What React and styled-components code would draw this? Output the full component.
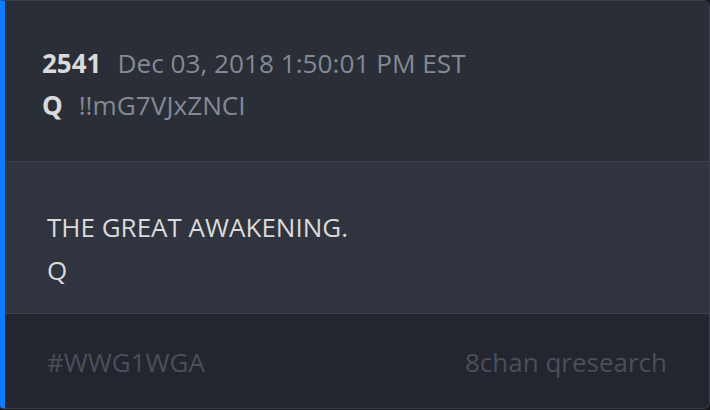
import React from 'react';
import styled, { createGlobalStyle } from 'styled-components';

const GlobalStyle = createGlobalStyle`
  html, body {
    margin: 0;
    padding: 0;
    background: #16181d;
  }
  body {
    font-family: "Open Sans", "Noto Sans", sans-serif;
  }
`;

const Card = styled.article`
  width: 710px;
  height: 409px;
  box-sizing: border-box;
  display: flex;
  flex-direction: column;
  border: 1px solid #3b404a;
  border-left: 5px solid #0a7cff;
  border-radius: 0 7px 7px 4px;
  overflow: hidden;
  background: #2a2e36;
`;

const Header = styled.header`
  height: 161px;
  box-sizing: border-box;
  padding: 41px 0 0 37px;
  background: #2a2e36;
  border-bottom: 1px solid #3b404a;
`;

const MetaRow = styled.div`
  display: flex;
  align-items: baseline;
  gap: 16px;
  height: 42px;
  line-height: 42px;
`;

const PostNumber = styled.span`
  font-size: 26px;
  font-weight: 700;
  color: #d9dadc;
`;

const Muted = styled.span`
  font-size: 26.2px;
  color: #848994;
`;

const Body = styled.section`
  height: 152px;
  box-sizing: border-box;
  padding: 44px 0 0 42px;
  background: #2f343e;
  border-bottom: 1px solid #3b404a;
`;

const Line = styled.p`
  margin: 0;
  font-size: 26px;
  line-height: 43px;
  color: #dadada;
`;

const Footer = styled.footer`
  flex: 1;
  display: flex;
  justify-content: space-between;
  align-items: center;
  padding: 2px 42px 0 42px;
  background: #23262e;
  font-size: 26px;
  color: #4a4f5a;
`;

export default function App() {
  return (
    <>
      <GlobalStyle />
      <Card>
        <Header>
          <MetaRow>
            <PostNumber>2541</PostNumber>
            <Muted>Dec 03, 2018 1:50:01 PM EST</Muted>
          </MetaRow>
          <MetaRow>
            <PostNumber>Q</PostNumber>
            <Muted>!!mG7VJxZNCI</Muted>
          </MetaRow>
        </Header>
        <Body>
          <Line>THE GREAT AWAKENING.</Line>
          <Line>Q</Line>
        </Body>
        <Footer>
          <span>#WWG1WGA</span>
          <span>8chan qresearch</span>
        </Footer>
      </Card>
    </>
  );
}
